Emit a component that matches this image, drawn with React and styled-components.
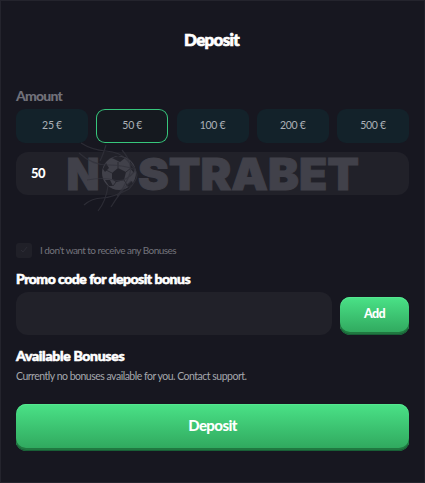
import React, { useState } from 'react'
import styled, { createGlobalStyle } from 'styled-components'

const GlobalStyle = createGlobalStyle`
    *{
        box-sizing: border-box;
    }
    body{
        margin: 0;
        background: #171720;
    }
    button, input{
        font-family: inherit;
        border: none;
        outline: none;
    }
`

const Panel = styled.form`
    height: 483px;
    display: flex;
    flex-direction: column;
    padding: 0 15px 0 15px;
    border: 1px solid #24242d;
    border-right-color: #20202a;
    background: #171720;
    color: #ffffff;
    font-family: Lato, sans-serif;
`

const Title = styled.h1`
    margin: 28px 0 0;
    padding-right: 2px;
    line-height: 22px;
    font-size: 17px;
    font-weight: 900;
    letter-spacing: -0.7px;
    text-align: center;
    -webkit-text-stroke: 0.7px #ffffff;
`

const Heading = styled.h2`
    margin: ${props=>props.$top}px 0 0;
    line-height: 18px;
    font-size: 14px;
    font-weight: 900;
    letter-spacing: ${props=>props.$spacing || -0.5}px;
    color: ${props=>props.$muted ? "#71717a" : "#ffffff"};
    -webkit-text-stroke: ${props=>props.$muted ? "0" : "0.6px #ffffff"};
`

const Amounts = styled.div`
    display: grid;
    grid-template-columns: repeat(5, 72px);
    justify-content: space-between;
    margin-top: 4px;
`

const AmountButton = styled.button`
    height: 34px;
    padding: 0 0 2px;
    border-radius: 9px;
    background: ${props=>props.$active ? "#15191f" : "#13222a"};
    box-shadow: ${props=>props.$active ? "inset 0 0 0 1px #37c67c" : "none"};
    color: #abb0b6;
    font-size: 10.5px;
    letter-spacing: -0.3px;
`

const AmountField = styled.div`
    position: relative;
    margin-top: 9px;
`

const Input = styled.input`
    display: block;
    width: 100%;
    height: 43px;
    padding: 0 15px 2px;
    border-radius: 12px;
    background: #212129;
    color: #ffffff;
    font-size: 13px;
    font-weight: 900;
    letter-spacing: -0.6px;
`

const Watermark = styled.svg`
    position: absolute;
    left: 51px;
    top: -12px;
    pointer-events: none;
`

const Option = styled.label`
    display: flex;
    align-items: center;
    gap: 8px;
    height: 16px;
    margin-top: 47px;
    color: #74747c;
    font-size: 10px;
    letter-spacing: -0.55px;
`

const Box = styled.span`
    display: flex;
    align-items: center;
    justify-content: center;
    width: 16px;
    height: 15px;
    border-radius: 3px;
    background: #202028;
`

const PromoRow = styled.div`
    display: flex;
    align-items: flex-end;
    gap: 8px;
    margin-top: 4px;
`

const GreenButton = styled.button`
    flex: none;
    width: ${props=>props.$width || "100%"};
    height: ${props=>props.$height}px;
    margin-top: ${props=>props.$top || 0}px;
    padding: 0 0 5px;
    border-radius: 10px;
    background: linear-gradient(#4ae287, #2fa55c);
    box-shadow: inset 0 1px 0 #55e890, inset 0 -1px 0 #185f36, inset 0 -3px 0 #207840;
    color: #ffffff;
    font-size: ${props=>props.$size}px;
    font-weight: 900;
    letter-spacing: -0.6px;
`

const Note = styled.p`
    margin: 4px 0 0;
    line-height: 15px;
    color: #a5a7ad;
    font-size: 10.5px;
    letter-spacing: -0.5px;
    white-space: nowrap;
`

function Logo(){
    return (
        <Watermark width="296" height="76" viewBox="67 140 296 76">
            <g fill="#41414a" stroke="#41414a" strokeWidth="1" fontFamily="Inter, sans-serif" fontWeight="900" fontSize="44">
                <text x="66.5" y="189.5" textLength="33" lengthAdjust="spacingAndGlyphs">N</text>
                <text x="138" y="189.5" textLength="221" lengthAdjust="spacingAndGlyphs">STRABET</text>
            </g>
            <circle cx="119" cy="173" r="17" fill="#41414a" />
            <g fill="#24242c">
                <path d="M112 173l6-5 8 4-2 8-8 2-4-3z" />
                <path d="M112 158l6-2 7 2-5 4zM103 169l3-6 3 5-4 4zM130 161l5 7-1 5-4-5zM105 180l5 0 3 6-4 0zM126 185l6-4 1 3-5 3z" />
            </g>
            <g fill="none" stroke="#24242c" strokeWidth="0.8">
                <path d="M118 168v-6m8 10l5-4m-7 12l3 5m-11-3l-3 4m-1-13l-6-3" />
            </g>
            <g fill="none" stroke="#33333c" strokeWidth="1.2" opacity="0.75">
                <path d="M81 143q11 7 25 8t21 9q10 10 10 15t-8 14q-17 9-27 9t-18 7" />
                <path d="M79 153q13 12 29 12t28 5M106 145q-3 10-6 16M122 150q12 14 7 26t-12 20" />
                <path d="M87 180q16-3 27 0t20-8M98 211q8-10 10-25M111 207q9-15 20-26" />
            </g>
        </Watermark>
    )
}

function App(){
    const [amount, setAmount] = useState("50")
    const [promo, setPromo] = useState("")
    return (
        <Panel onSubmit={(e)=>e.preventDefault()}>
            <GlobalStyle />
            <Title>Deposit</Title>
            <Heading $top={36} $muted $spacing={-0.8}>Amount</Heading>
            <Amounts>
                {["25", "50", "100", "200", "500"].map((value)=>(
                    <AmountButton key={value} type="button" $active={value===amount} onClick={()=>setAmount(value)}>{value} €</AmountButton>
                ))}
            </Amounts>
            <AmountField>
                <Input aria-label="Amount" value={amount} onChange={(e)=>setAmount(e.target.value)} />
                <Logo />
            </AmountField>
            <Option>
                <Box>
                    <svg width="8" height="8" viewBox="0 0 8 8" fill="none" stroke="#2c2c35"><path d="M1 4l2 2 4-5" /></svg>
                </Box>
                I don't want to receive any Bonuses
            </Option>
            <Heading $top={12}>Promo code for deposit bonus</Heading>
            <PromoRow>
                <Input aria-label="Promo code" value={promo} onChange={(e)=>setPromo(e.target.value)} />
                <GreenButton type="button" $width="69px" $height={38} $size={12.5}>Add</GreenButton>
            </PromoRow>
            <Heading $top={12} $spacing={-0.3}>Available Bonuses</Heading>
            <Note>Currently no bonuses available for you. Contact support.</Note>
            <GreenButton type="submit" $height={47} $top={20} $size={15}>Deposit</GreenButton>
        </Panel>
    )
}

export default App
